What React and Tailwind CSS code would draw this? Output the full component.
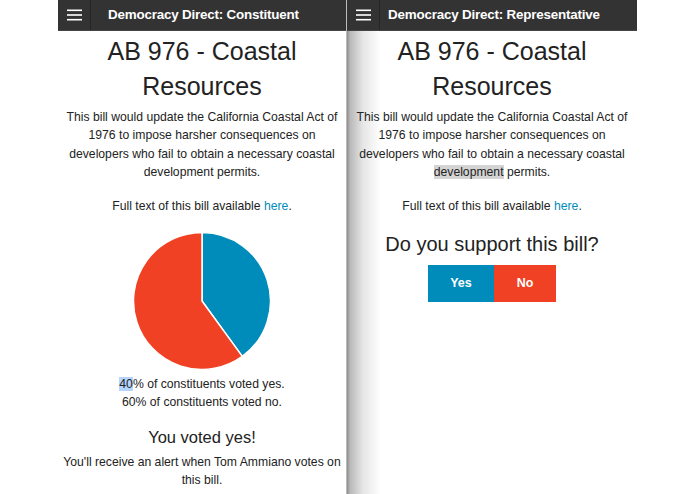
import React from 'react';

const font = { fontFamily: '"Liberation Sans", Arial, sans-serif' };

function TopBar({ title, gap }) {
  return (
    <div className="flex items-center h-[31px] bg-[#333333] text-white border-b border-[#444]">
      <div className="flex items-center justify-center w-[33px] h-full border-r border-[#262626]">
        <svg width="15" height="12" viewBox="0 0 15 12">
          <rect x="0" y="0.5" width="15" height="1.6" fill="#fff" />
          <rect x="0" y="5.2" width="15" height="1.6" fill="#fff" />
          <rect x="0" y="9.9" width="15" height="1.6" fill="#fff" />
        </svg>
      </div>
      <h1 className={`${gap} text-[13.4px] font-bold tracking-[-0.2px] whitespace-nowrap`}>{title}</h1>
    </div>
  );
}

function BillSummary({ highlightDev }) {
  return (
    <>
      <h2 className="mt-[3px] text-[25px] leading-[35px] text-[#222]">
        AB 976 - Coastal
        <br />
        Resources
      </h2>
      <p className="mt-[4px] px-[2px] text-[12.2px] leading-[18.4px] text-[#222]">
        This bill would update the California Coastal Act of 1976 to impose harsher consequences on developers who fail to obtain a necessary coastal{' '}
        {highlightDev ? <span className="bg-[#d4d4d4]">development</span> : 'development'} permits.
      </p>
      <p className="mt-[15px] text-[12.2px] leading-[18px] text-[#222]">
        Full text of this bill available <a className="text-[#008cba]">here</a>.
      </p>
    </>
  );
}

function Pie({ yes }) {
  const r = 68.5;
  const c = 69;
  const a = (yes / 100) * Math.PI * 2;
  const ex = c + r * Math.sin(a);
  const ey = c - r * Math.cos(a);
  const large = yes > 50 ? 1 : 0;
  return (
    <svg width="138" height="138" viewBox="0 0 138 138">
      <path d={`M${c} ${c} L${c} ${c - r} A${r} ${r} 0 ${large} 1 ${ex} ${ey} Z`} fill="#008cba" stroke="#fff" strokeWidth="1.5" strokeLinejoin="round" />
      <path d={`M${c} ${c} L${ex} ${ey} A${r} ${r} 0 ${1 - large} 1 ${c} ${c - r} Z`} fill="#f04124" stroke="#fff" strokeWidth="1.5" strokeLinejoin="round" />
    </svg>
  );
}

function ConstituentPanel() {
  return (
    <div className="w-[289px] shrink-0 border-r border-[#bbb] h-[494px] flex flex-col">
      <TopBar title="Democracy Direct: Constituent" gap="pl-[17px]" />
      <div className="flex flex-col items-center text-center">
        <BillSummary />
        <div className="mt-[17px]">
          <Pie yes={40} />
        </div>
        <p className="mt-[5px] text-[12.2px] leading-[18px] text-[#222]">
          <span className="bg-[#b4d5fe]">40</span>% of constituents voted yes.
          <br />
          60% of constituents voted no.
        </p>
        <h3 className="mt-[15px] text-[16.5px] leading-[22px] text-[#222]">You voted yes!</h3>
        <p className="mt-[5px] px-[2px] text-[12.2px] leading-[18px] text-[#222]">
          You'll receive an alert when Tom Ammiano votes on this bill.
        </p>
      </div>
    </div>
  );
}

function RepresentativePanel() {
  return (
    <div className="w-[290px] shrink-0 h-[494px] flex flex-col">
      <TopBar title="Democracy Direct: Representative" gap="pl-[8px]" />
      <div className="flex-1 flex flex-col items-center text-center bg-[linear-gradient(to_right,#8c8c8c_0px,#b8b8b8_3px,#e6e6e6_16px,#ffffff_34px)]">
        <BillSummary highlightDev />
        <h3 className="mt-[17px] text-[20px] leading-[24px] text-[#222]">Do you support this bill?</h3>
        <div className="mt-[9px] flex">
          <button className="w-[66px] h-[37px] bg-[#008cba] text-white text-[12.5px] font-bold">Yes</button>
          <button className="w-[62px] h-[37px] bg-[#f04124] text-white text-[12.5px] font-bold">No</button>
        </div>
      </div>
    </div>
  );
}

export default function App() {
  return (
    <div className="w-[695px] h-[494px] bg-white overflow-hidden flex pl-[58px]" style={font}>
      <ConstituentPanel />
      <RepresentativePanel />
    </div>
  );
}
